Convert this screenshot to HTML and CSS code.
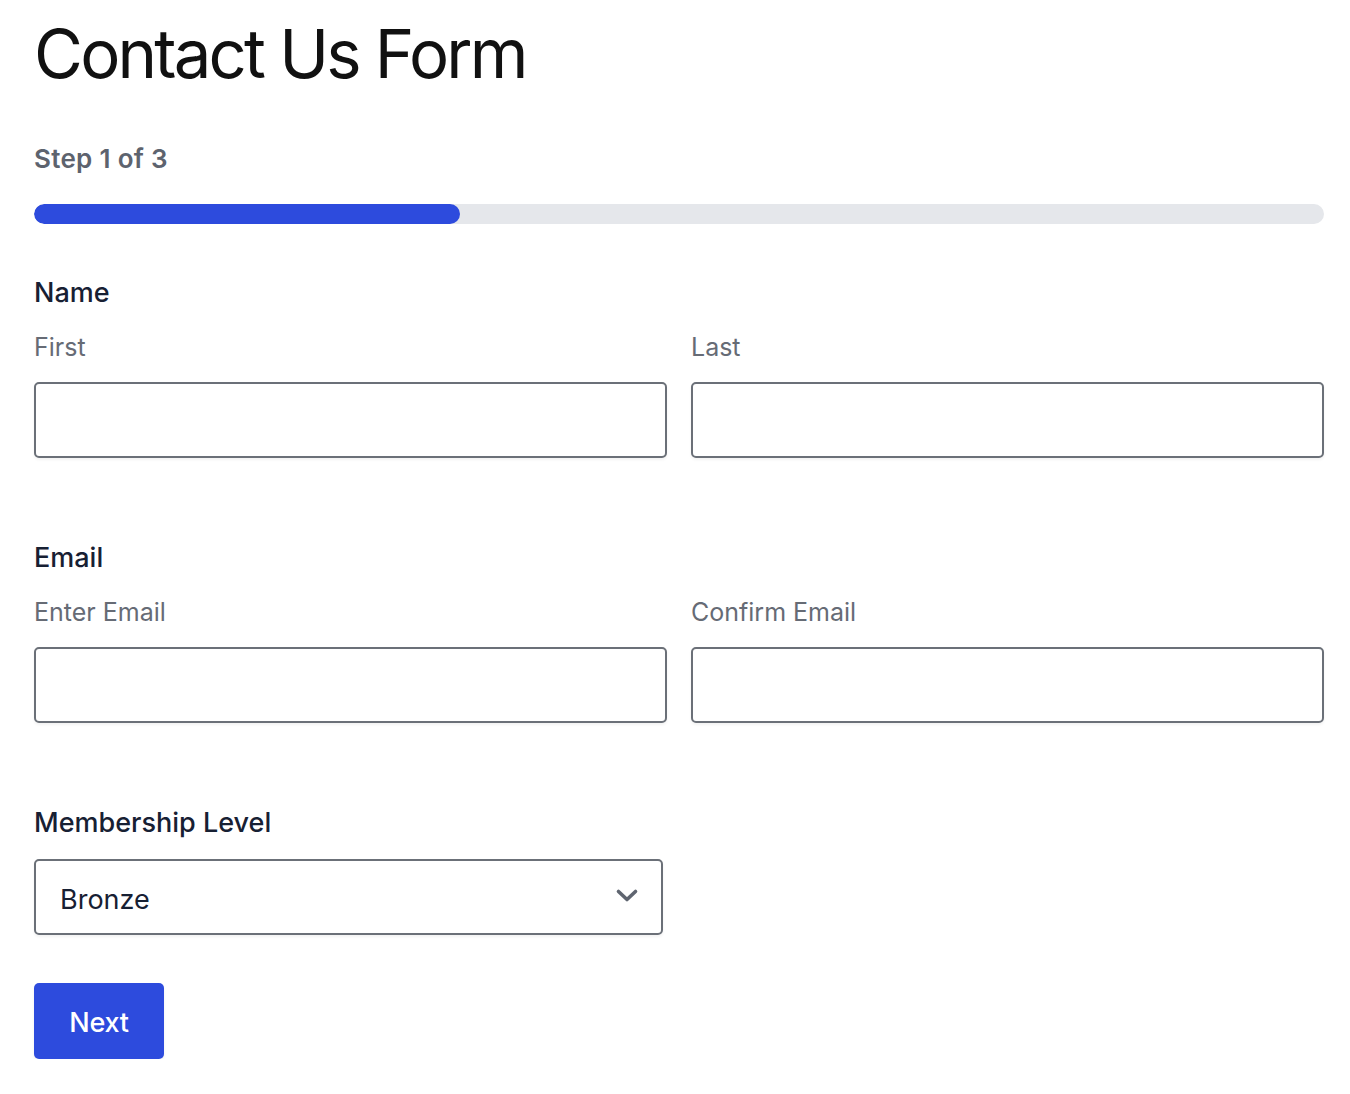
FILE: index.html
```html
<!DOCTYPE html>
<html lang="en">
<head>
<meta charset="utf-8">
<title>Contact Us Form</title>
<link rel="stylesheet" href="styles.css">
</head>
<body>
<main class="page">
  <h1 class="title">Contact Us Form</h1>
  <div class="step">Step 1 of 3</div>
  <div class="progress"><div class="progress-fill" style="width:33%"></div></div>

  <section class="group group-first">
    <div class="group-label">Name</div>
    <div class="row">
      <label class="field">
        <span class="sub-label">First</span>
        <input class="input" type="text">
      </label>
      <label class="field">
        <span class="sub-label">Last</span>
        <input class="input" type="text">
      </label>
    </div>
  </section>

  <section class="group">
    <div class="group-label">Email</div>
    <div class="row">
      <label class="field">
        <span class="sub-label">Enter Email</span>
        <input class="input" type="email">
      </label>
      <label class="field">
        <span class="sub-label">Confirm Email</span>
        <input class="input" type="email">
      </label>
    </div>
  </section>

  <section class="group">
    <div class="group-label">Membership Level</div>
    <div class="select">
      <span class="select-value">Bronze</span>
      <svg class="chevron" width="24" height="16" viewBox="0 0 24 16" aria-hidden="true">
        <path d="M3.5 3.5 L12 11.5 L20.5 3.5" fill="none" stroke="#5f6570" stroke-width="3.6" stroke-linecap="round" stroke-linejoin="round"/>
      </svg>
    </div>
  </section>

  <button class="btn" type="button">Next</button>
</main>
</body>
</html>
```

FILE: styles.css
```css
* { box-sizing: border-box; }

html, body {
  margin: 0;
  padding: 0;
  background: #ffffff;
}

body {
  font-family: "Inter", "Noto Sans", "Liberation Sans", sans-serif;
  color: #111827;
}

.page {
  padding: 14px 26px 0 34px;
  width: 1350px;
}

.title {
  margin: 0;
  font-size: 67px;
  font-weight: 400;
  line-height: 80px;
  letter-spacing: -2.8px;
  color: #111111;
}

.step {
  margin-top: 49px;
  font-size: 26px;
  line-height: 32px;
  font-weight: 600;
  color: #5d636e;
  letter-spacing: 0.3px;
}

.progress {
  margin-top: 29px;
  height: 20px;
  border-radius: 10px;
  background: #e5e7eb;
  overflow: hidden;
}

.progress-fill {
  height: 100%;
  background: #2d4bdd;
  border-radius: 10px;
}

.group {
  margin-top: 84px;
}

.group-first {
  margin-top: 53px;
}

.group-label {
  font-size: 27px;
  line-height: 32px;
  font-weight: 500;
  color: #172033;
  letter-spacing: 0;
}

.row {
  display: grid;
  grid-template-columns: 1fr 1fr;
  column-gap: 24px;
  margin-top: 22px;
}

.field {
  display: flex;
  flex-direction: column;
}

.sub-label {
  font-size: 25px;
  line-height: 32px;
  font-weight: 400;
  color: #666b75;
  letter-spacing: 0;
  margin-bottom: 19px;
}

.input {
  display: block;
  width: 100%;
  height: 76px;
  border: 2px solid #6b7078;
  border-radius: 5px;
  background: #ffffff;
  box-shadow: 0 2px 3px rgba(0, 0, 0, 0.05);
  font: inherit;
}

.select {
  margin-top: 20px;
  width: 629px;
  height: 76px;
  border: 2px solid #6b7078;
  border-radius: 5px;
  box-shadow: 0 2px 3px rgba(0, 0, 0, 0.05);
  display: flex;
  align-items: center;
  justify-content: space-between;
  padding: 0 22px 0 24px;
}

.select-value {
  font-size: 27px;
  line-height: 32px;
  color: #172033;
  letter-spacing: 0;
  padding-top: 6px;
}

.chevron {
  display: block;
  margin-top: -2px;
}

.btn {
  margin-top: 48px;
  width: 130px;
  height: 76px;
  border: none;
  border-radius: 5px;
  background: #2d4bdd;
  color: #ffffff;
  font-family: inherit;
  font-size: 27px;
  font-weight: 500;
  letter-spacing: -0.2px;
  box-shadow: 0 2px 3px rgba(0, 0, 0, 0.06);
  padding: 2px 0 0 0;
}
```
